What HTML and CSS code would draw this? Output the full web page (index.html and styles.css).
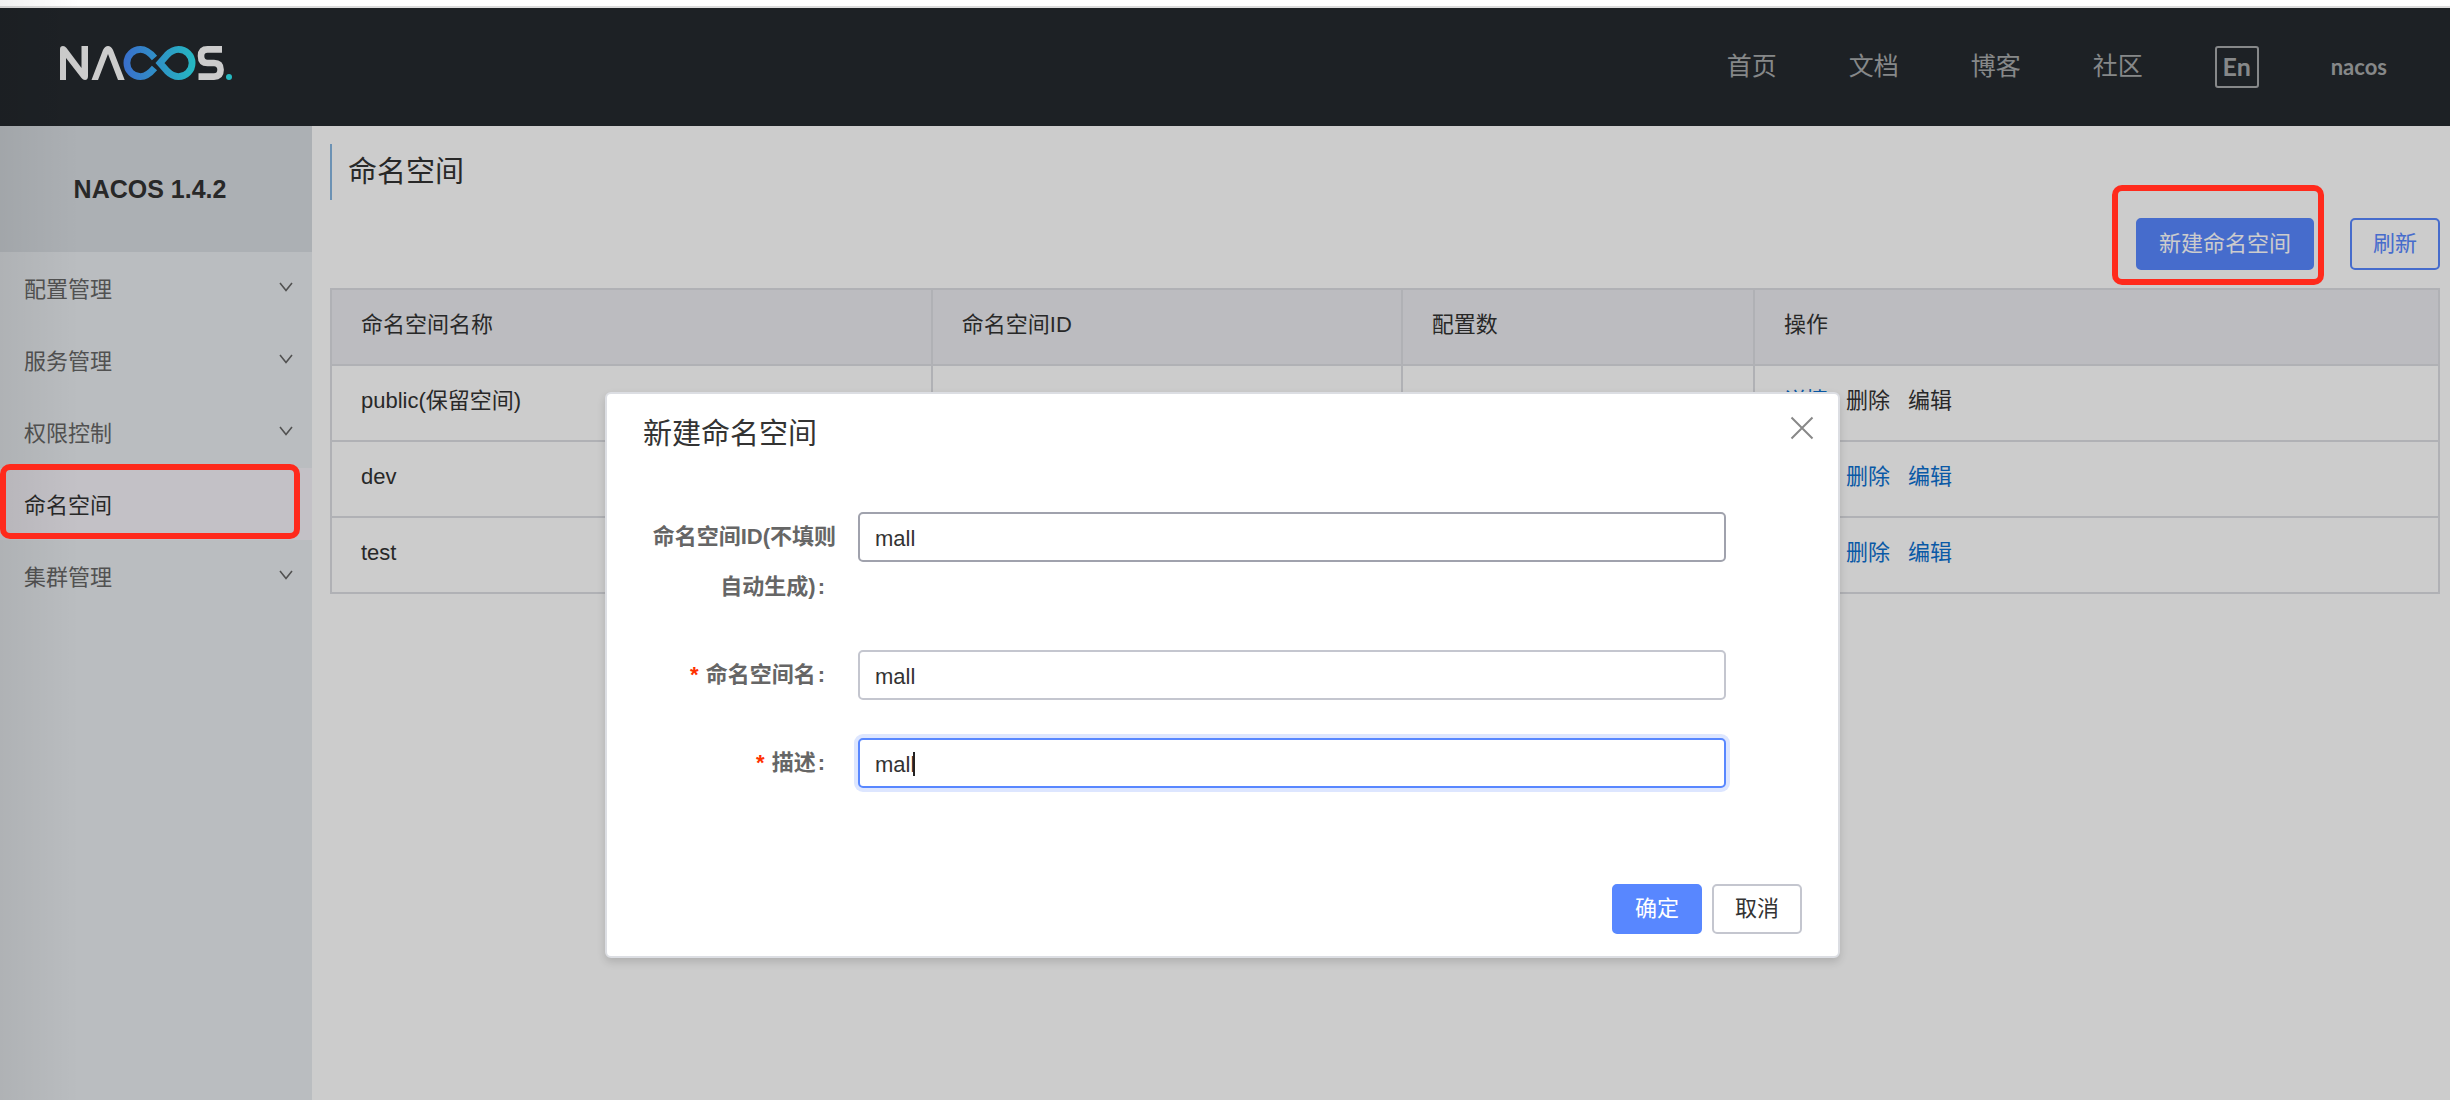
FILE: index.html
```html
<!DOCTYPE html>
<html lang="zh-CN">
<head>
<meta charset="utf-8">
<meta name="viewport" content="width=device-width, initial-scale=1">
<title>Nacos</title>
<link rel="stylesheet" href="styles.css">
</head>
<body>
<div class="app">
  <header class="topbar">
    <a class="logo" href="#" aria-label="Nacos">
      <svg width="172" height="34" viewBox="0 0 172 34" fill="none">
        <defs>
          <linearGradient id="loop" gradientUnits="userSpaceOnUse" x1="64" y1="0" x2="136" y2="0">
            <stop offset="0" stop-color="#488bff"/>
            <stop offset="1" stop-color="#2ee8f2"/>
          </linearGradient>
        </defs>
        <path fill="#fff" d="M0 3Q0 0 3 0Q5 0 6.500 2L21.500 22V0H28V30Q28 34 25 34Q23 34 21.500 32L6 12V34H0Z"/>
        <path fill="#fff" d="M31.500 34L43 4Q45 0 48 0Q51 0 53 4L64.700 34H58L48 8L38 34Z"/>
        <path stroke="url(#loop)" stroke-width="6.800" d="M94.500 12C89 5.500 85.500 3.400 80.500 3.400A13.600 13.600 0 0 0 80.500 30.600C85.500 30.600 89 28.500 94.500 22"/>
        <path stroke="url(#loop)" stroke-width="6.800" stroke-linejoin="miter" d="M100 17L107 9C111 5 114 3.400 118.500 3.400A13.600 13.600 0 0 1 118.500 30.600C114 30.600 111 29 107 25Z"/>
        <path stroke="#fff" stroke-width="6.600" d="M162 3.400H147.500Q141 3.400 141 10Q141 17 147.500 17H154Q160.600 17 160.600 23.800Q160.600 30.600 154 30.600H138.500"/>
        <circle cx="169" cy="31" r="3" fill="#2ee8f2"/>
      </svg>
    </a>
    <nav class="topnav">
      <a href="#">首页</a>
      <a href="#">文档</a>
      <a href="#">博客</a>
      <a href="#">社区</a>
      <button class="lang" type="button">En</button>
      <a class="user" href="#">nacos</a>
    </nav>
  </header>

  <div class="body">
    <aside class="sidebar">
      <h1 class="version">NACOS 1.4.2</h1>
      <ul class="menu">
        <li><a href="#">配置管理<svg class="arrow" width="14" height="10" viewBox="0 0 14 10"><path d="M1 1L7 8.500L13 1"/></svg></a></li>
        <li><a href="#">服务管理<svg class="arrow" width="14" height="10" viewBox="0 0 14 10"><path d="M1 1L7 8.500L13 1"/></svg></a></li>
        <li><a href="#">权限控制<svg class="arrow" width="14" height="10" viewBox="0 0 14 10"><path d="M1 1L7 8.500L13 1"/></svg></a></li>
        <li class="current"><a href="#">命名空间</a><span class="mark mark-menu"></span></li>
        <li><a href="#">集群管理<svg class="arrow" width="14" height="10" viewBox="0 0 14 10"><path d="M1 1L7 8.500L13 1"/></svg></a></li>
      </ul>
    </aside>

    <main class="content">
      <h2 class="page-title">命名空间</h2>
      <div class="toolbar">
        <div class="marked">
          <button class="btn btn-primary" type="button">新建命名空间</button>
          <span class="mark mark-create"></span>
        </div>
        <button class="btn btn-outline" type="button">刷新</button>
      </div>
      <table class="grid">
        <colgroup><col class="c-name"><col class="c-id"><col class="c-count"><col class="c-ops"></colgroup>
        <thead>
          <tr><th scope="col">命名空间名称</th><th scope="col">命名空间ID</th><th scope="col">配置数</th><th scope="col">操作</th></tr>
        </thead>
        <tbody>
          <tr><td>public(保留空间)</td><td></td><td></td><td><div class="ops"><a href="#">详情</a><span>删除</span><span>编辑</span></div></td></tr>
          <tr><td>dev</td><td></td><td></td><td><div class="ops"><a href="#">详情</a><a href="#">删除</a><a href="#">编辑</a></div></td></tr>
          <tr><td>test</td><td></td><td></td><td><div class="ops"><a href="#">详情</a><a href="#">删除</a><a href="#">编辑</a></div></td></tr>
        </tbody>
      </table>
    </main>
  </div>

  <div class="overlay">
    <section class="dialog" role="dialog" aria-modal="true" aria-labelledby="dialog-title">
      <header class="dialog-head">
        <h2 id="dialog-title">新建命名空间</h2>
        <button class="close" type="button" aria-label="关闭">
          <svg width="24" height="24" viewBox="0 0 24 24"><path d="M1.500 1.500L22.500 22.500M22.500 1.500L1.500 22.500"/></svg>
        </button>
      </header>
      <form class="form">
        <div class="row">
          <label for="ns-id">命名空间ID(不填则自动生成)</label>
          <div class="field"><input class="is-hover" id="ns-id" type="text" value="mall"></div>
        </div>
        <div class="row">
          <label class="required" for="ns-name">命名空间名</label>
          <div class="field"><input id="ns-name" type="text" value="mall"></div>
        </div>
        <div class="row">
          <label class="required" for="ns-desc">描述</label>
          <div class="field"><input class="is-focus" id="ns-desc" type="text" value="mall"><span class="caret"></span></div>
        </div>
      </form>
      <footer class="dialog-foot">
        <button class="btn btn-primary" type="submit">确定</button>
        <button class="btn btn-normal" type="button">取消</button>
      </footer>
    </section>
  </div>
  <div class="edge"></div>
</div>
</body>
</html>
```
FILE: styles.css
```css
* { box-sizing: border-box; }

body {
  margin: 0;
  background: #fff;
  color: #333;
  font: 22px/32px "Liberation Sans", "Noto Sans CJK SC", sans-serif;
}

h1, h2, ul { margin: 0; padding: 0; font-weight: 400; }
ul { list-style: none; }
a { color: inherit; text-decoration: none; }
button, input { font: inherit; }

.app {
  position: relative;
  display: flex;
  flex-direction: column;
  min-height: 100vh;
  padding-top: 6px;
}

/* top bar */
.topbar {
  display: flex;
  align-items: center;
  justify-content: space-between;
  height: 120px;
  padding: 0 63px 0 60px;
  border-top: 2px solid #dcdcdc;
  background: #252a2f;
}
.logo { display: flex; margin-bottom: 8px; }
.topnav {
  display: flex;
  align-items: center;
  gap: 72px;
  color: #a8aaac;
  font: 25px/38px Lato, "Noto Sans CJK SC", sans-serif;
}
.topnav > a { padding-bottom: 4px; }
.lang {
  width: 44px;
  height: 42px;
  padding: 0 0 2px;
  border: 2px solid #a8aaac;
  border-radius: 3px;
  background: none;
  color: inherit;
  font-weight: 700;
  line-height: 36px;
}
.topnav > .user { padding: 0; font-size: 22px; font-weight: 700; }

/* sidebar */
.body { display: flex; flex: 1; }
.sidebar { flex: none; width: 312px; background: #e9edf0; }
.version {
  height: 126px;
  padding-right: 12px;
  background: #d8dce2;
  font-size: 25px;
  font-weight: 700;
  line-height: 126px;
  text-align: center;
}
.menu li { position: relative; }
.menu a {
  display: flex;
  align-items: center;
  justify-content: space-between;
  height: 72px;
  padding: 4px 19px 0 24px;
  color: #666;
}
.menu .current { background: #f4f2f8; }
.menu .current a { color: #333; }
.arrow { margin-bottom: 6px; fill: none; stroke: #666; stroke-width: 1.600; }

/* content */
.content { flex: 1; min-width: 0; padding: 18px 10px 18px 18px; }
.page-title {
  height: 56px;
  padding-left: 16px;
  border-left: 2px solid #88b7e2;
  font-size: 29px;
  line-height: 56px;
}
.toolbar { display: flex; justify-content: flex-end; gap: 36px; margin: 18px 0; }
.btn {
  display: block;
  height: 52px;
  padding: 0 21px;
  border: 2px solid #5887ff;
  border-radius: 5px;
  line-height: 46px;
}
.btn-primary { background: #5887ff; color: #fff; }
.btn-outline { background: none; color: #5887ff; }
.btn-normal { border-color: #c4c6cf; background: #fff; color: #333; }

.grid { width: 100%; border-collapse: collapse; table-layout: fixed; }
.c-name { width: 28.5%; }
.c-id { width: 22.3%; }
.c-count { width: 16.7%; }
.c-ops { width: 32.5%; }
.grid th, .grid td {
  height: 76px;
  padding: 0 29px 4px;
  border: 2px solid #dcdee3;
  font-weight: 400;
  text-align: left;
}
.grid th { background: #ebecf0; }
.ops { display: flex; gap: 18px; }
.ops a { color: #0c70d0; }

/* highlight frames */
.marked { position: relative; }
.mark {
  position: absolute;
  z-index: 20;
  border: 6px solid #ff2a1c;
  border-radius: 10px;
  pointer-events: none;
}
.mark-menu { inset: -4px 12px 1px 0; }
.mark-create { inset: -33px -10px -15px -24px; }

/* dialog */
.overlay {
  position: absolute;
  inset: 8px 0 0;
  z-index: 10;
  display: flex;
  align-items: flex-start;
  justify-content: center;
  padding: 384px 5px 0 0;
  background: rgba(0, 0, 0, 0.2);
}
.dialog {
  width: 1235px;
  max-width: 90%;
  border: 2px solid #dcdee3;
  border-radius: 6px;
  background: #fff;
  box-shadow: 0 4px 8px rgba(0, 0, 0, 0.14);
}
.dialog-head {
  display: flex;
  align-items: flex-start;
  justify-content: space-between;
  padding: 20px 24px 0 36px;
}
.dialog-head h2 { font-size: 29px; line-height: 40px; }
.close { display: flex; padding: 2px 0; border: 0; background: none; }
.close svg { fill: none; stroke: #888; stroke-width: 2; }

.form { padding: 58px 112px 0 36px; }
.row { display: flex; gap: 22px; margin-bottom: 38px; }
.row label {
  flex: none;
  width: 193px;
  color: #666;
  font-weight: 700;
  line-height: 50px;
  text-align: right;
}
.row label::after { content: ":"; margin: 0 11px 0 2px; }
.required::before { content: "*"; margin-right: 7px; color: #ff3000; }
.field { position: relative; flex: 1; }
.field input {
  display: block;
  width: 100%;
  height: 50px;
  padding: 3px 15px 0;
  border: 2px solid #c4c6cf;
  border-radius: 5px;
  background: #fff;
  color: #333;
  outline: 0;
}
.field .is-hover { border-color: #a0a2ad; }
.field .is-focus { border-color: #5887ff; box-shadow: 0 0 0 4px #dde6ff; }
.caret {
  position: absolute;
  top: 14px;
  left: 55px;
  width: 2px;
  height: 24px;
  background: #222;
}
.dialog-foot {
  display: flex;
  justify-content: flex-end;
  gap: 10px;
  padding: 58px 36px 22px;
}
.dialog-foot .btn { height: 50px; line-height: 44px; }

/* soft shade along the left edge of the window */
.edge {
  position: absolute;
  inset: 0 auto 0 0;
  z-index: 15;
  width: 80px;
  background: linear-gradient(to right, rgba(0, 0, 0, 0.06), rgba(0, 0, 0, 0));
  pointer-events: none;
}
```
